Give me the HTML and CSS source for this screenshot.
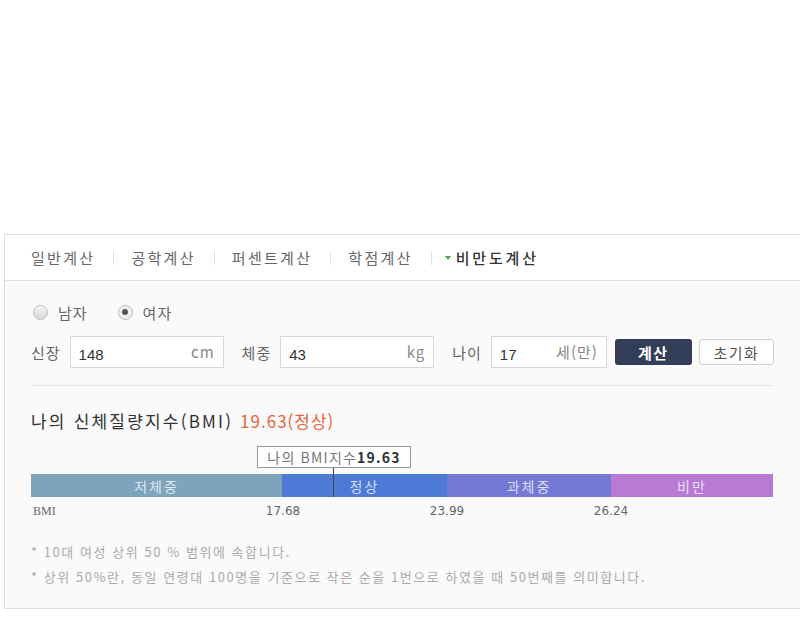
FILE: index.html
```html
<!DOCTYPE html>
<html lang="ko">
<head>
<meta charset="utf-8">
<title>비만도계산</title>
<link rel="stylesheet" href="styles.css">
</head>
<body>
<div class="card">
  <div class="tabs">
    <span class="tab">일반계산</span>
    <span class="sep"></span>
    <span class="tab">공학계산</span>
    <span class="sep"></span>
    <span class="tab">퍼센트계산</span>
    <span class="sep"></span>
    <span class="tab">학점계산</span>
    <span class="sep"></span>
    <span class="tab active"><span class="tri"></span>비만도계산</span>
  </div>
  <div class="body">
    <div class="radios">
      <label class="radio"><span class="circle"></span>남자</label>
      <label class="radio"><span class="circle on"></span>여자</label>
    </div>
    <div class="inputs">
      <span class="lbl">신장</span>
      <span class="field f1"><span class="val">148</span><span class="unit">cm</span></span>
      <span class="lbl">체중</span>
      <span class="field f1"><span class="val">43</span><span class="unit">kg</span></span>
      <span class="lbl">나이</span>
      <span class="field f2"><span class="val">17</span><span class="unit">세(만)</span></span>
      <span class="btn primary">계산</span>
      <span class="btn reset">초기화</span>
    </div>
    <div class="divider"></div>
    <div class="title">나의 신체질량지수(BMI) <span class="res">19.63(정상)</span></div>
    <div class="chart">
      <div class="tip" style="left:226px">나의 BMI지수<b>19.63</b></div>
      <div class="marker" style="left:302px"></div>
      <div class="bar">
        <div class="seg s1">저체중</div>
        <div class="seg s2">정상</div>
        <div class="seg s3">과체중</div>
        <div class="seg s4">비만</div>
      </div>
      <div class="scale">
        <span class="bmi">BMI</span>
        <span class="num n1">17.68</span>
        <span class="num n2">23.99</span>
        <span class="num n3">26.24</span>
      </div>
    </div>
    <div class="notes">
      <p>* 10대 여성 상위 50 % 범위에 속합니다.</p>
      <p>* 상위 50%란, 동일 연령대 100명을 기준으로 작은 순을 1번으로 하였을 때 50번째를 의미합니다.</p>
    </div>
  </div>
</div>
</body>
</html>
```
FILE: styles.css
```css
html, body {
  margin: 0;
  padding: 0;
  background: #fff;
  overflow: hidden;
}
body {
  font-family: "Noto Sans CJK KR", "Noto Sans", sans-serif;
  color: #666;
}
.card {
  margin: 234px 0 0 4px;
  width: 830px;
  border: 1px solid #dedede;
}
.tabs {
  height: 45px;
  background: #fff;
  border-bottom: 1px solid #e2e2e2;
  display: flex;
  align-items: center;
  padding-left: 26px;
  font-size: 15px;
  letter-spacing: 2.3px;
}
.tab {
  color: #666;
  line-height: 20px;
}
.sep {
  width: 1px;
  height: 14px;
  background: #e0e0e0;
  margin: 0 17px 0 18px;
}
.tab.active {
  color: #333;
  font-weight: 500;
  display: flex;
  align-items: center;
  letter-spacing: 2.8px;
}
.tri {
  width: 0;
  height: 0;
  border-left: 3px solid transparent;
  border-right: 3px solid transparent;
  border-top: 4px solid #3aa845;
  margin: 0 5px 0 -4px;
}
.body {
  background: #fafafa;
  padding: 21px 0 19px 26px;
}
.radios {
  display: flex;
  height: 20px;
  align-items: center;
  font-size: 15px;
  gap: 28px;
  letter-spacing: 1px;
}
.radio {
  display: flex;
  align-items: center;
  color: #666;
}
.circle {
  width: 13px;
  height: 13px;
  border-radius: 50%;
  border: 1px solid #bdbdbd;
  background: linear-gradient(#f4f4f4, #d8d8d8);
  margin: 0 10px 0 2px;
  display: flex;
  align-items: center;
  justify-content: center;
}
.circle.on {
  background: #f0f0f0;
}
.circle.on::after {
  content: "";
  width: 6px;
  height: 6px;
  border-radius: 50%;
  background: #555;
}
.inputs {
  display: flex;
  align-items: center;
  margin-top: 14px;
  height: 32px;
  font-size: 15px;
}
.lbl {
  color: #666;
  margin-right: 9px;
  letter-spacing: 1px;
}
.field {
  border: 1px solid #d6d6d6;
  background: #fff;
  display: flex;
  align-items: center;
  justify-content: space-between;
  padding: 0 8px 0 8px;
  box-sizing: border-box;
  margin-right: 18px;
  height: 32px;
}
.f1 { width: 154px; }
.f2 { width: 116px; margin-right: 8px; }
.val {
  font-family: "Liberation Sans", Arial, sans-serif;
  color: #333;
  font-size: 15px;
  padding-top: 4px;
}
.unit {
  color: #888;
  font-size: 15px;
  padding-bottom: 2px;
  letter-spacing: 1px;
}
.btn {
  height: 26px;
  box-sizing: border-box;
  border-radius: 3px;
  display: flex;
  align-items: center;
  justify-content: center;
  font-size: 15px;
  letter-spacing: 1.5px;
}
.primary {
  width: 77px;
  background: #343d57;
  color: #fff;
  font-weight: bold;
  margin-right: 7px;
}
.reset {
  width: 75px;
  background: #fff;
  border: 1px solid #d0d0d0;
  color: #555;
}
.divider {
  height: 1px;
  width: 742px;
  background: #e6e6e6;
  margin-top: 17px;
}
.title {
  margin-top: 23px;
  height: 24px;
  line-height: 24px;
  font-size: 17px;
  color: #333;
  letter-spacing: 2.2px;
}
.res {
  color: #e8653a;
  letter-spacing: 1px;
}
.chart {
  position: relative;
  margin-top: 13px;
  padding-top: 28px;
}
.tip {
  position: absolute;
  top: 0;
  width: 154px;
  height: 22px;
  box-sizing: border-box;
  border: 1px solid #999;
  background: #fff;
  font-size: 14px;
  line-height: 20px;
  color: #777;
  text-align: center;
  letter-spacing: 1.2px;
}
.tip b {
  color: #333;
}
.marker {
  position: absolute;
  top: 22px;
  width: 1px;
  height: 29px;
  background: #444;
  z-index: 2;
}
.bar {
  display: flex;
  height: 23px;
  width: 742px;
  font-size: 14px;
  color: rgba(255,255,255,0.75);
  letter-spacing: 2px;
}
.seg {
  display: flex;
  align-items: center;
  justify-content: center;
}
.s1 { width: 251px; background: #7ea3bd; }
.s2 { width: 165px; background: #4e7ad7; }
.s3 { width: 164px; background: #7479d4; }
.s4 { width: 162px; background: #b97ad6; }
.scale {
  position: relative;
  height: 18px;
  margin-top: 5px;
  font-size: 12px;
  line-height: 18px;
  color: #666;
  font-family: "DejaVu Sans", sans-serif;
}
.bmi {
  position: absolute;
  left: 2px;
  font-family: "Liberation Serif", serif;
}
.num {
  position: absolute;
  width: 40px;
  text-align: center;
}
.n1 { left: 232px; }
.n2 { left: 396px; }
.n3 { left: 560px; }
.notes {
  margin-top: 19px;
  font-size: 13px;
  color: #aaa;
}
.notes p {
  margin: 0;
  line-height: 25px;
  letter-spacing: 1.55px;
}
```
